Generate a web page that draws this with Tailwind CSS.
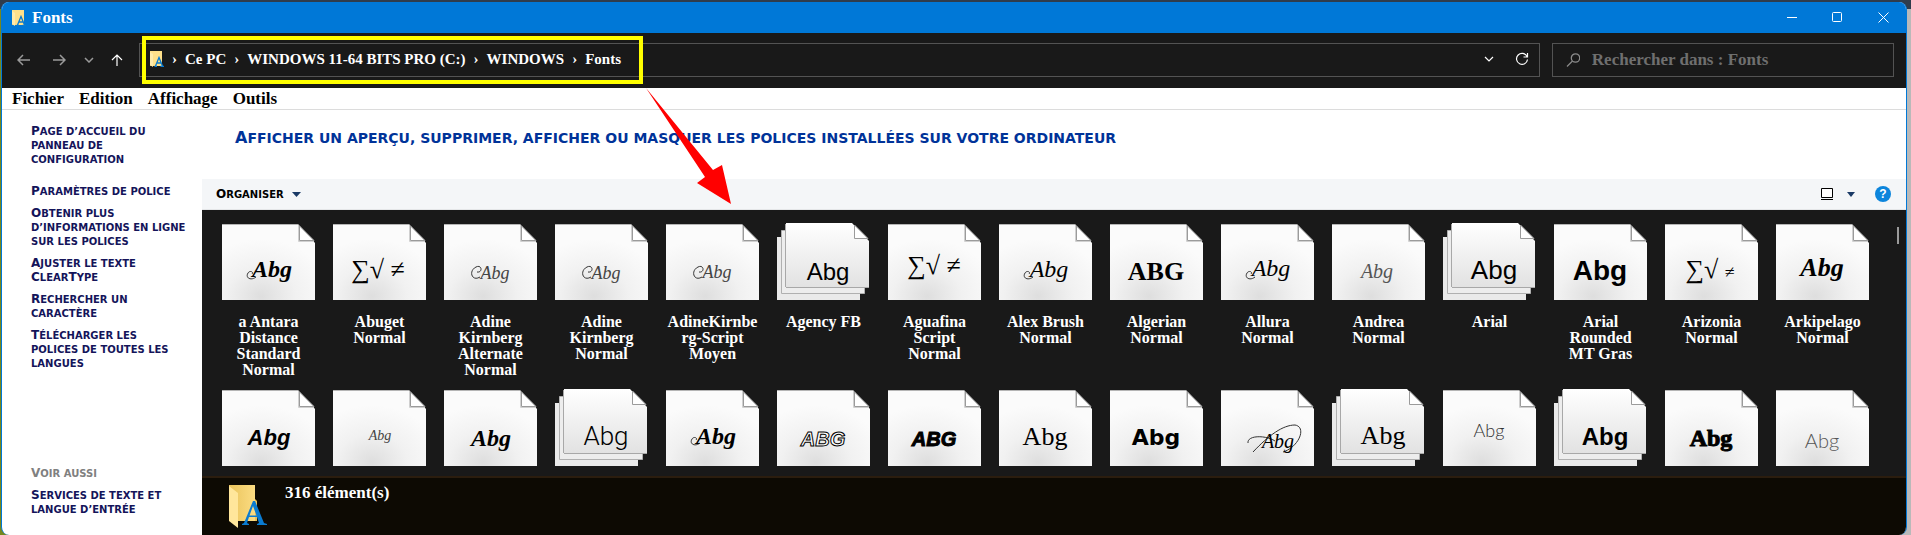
<!DOCTYPE html>
<html lang="fr">
<head>
  <meta charset="UTF-8">
  <title>Fonts</title>
  <meta name="viewport" content="width=device-width, initial-scale=1.0">
  <script src="https://cdn.jsdelivr.net/npm/@tailwindcss/browser@4"></script>
</head>
<body class="h-screen overflow-hidden bg-[linear-gradient(to_bottom,#2f3c4c_9px,transparent_9px),linear-gradient(to_right,#76871c_50%,#b9b9b9_50%)] pt-[2px] pl-px pr-1 font-['Liberation_Serif',serif]">

  <!-- Shared drawings -->
  <svg class="absolute h-0 w-0">
    <defs>
      <radialGradient id="paper" cx="0.42" cy="0.95" r="0.75">
        <stop offset="0" stop-color="#dedede"/>
        <stop offset="0.5" stop-color="#f1f1f1"/>
        <stop offset="1" stop-color="#fbfbfb"/>
      </radialGradient>
      <linearGradient id="sheet" x1="0" y1="0" x2="0" y2="1">
        <stop offset="0" stop-color="#ffffff"/>
        <stop offset="1" stop-color="#e2e2e2"/>
      </linearGradient>
      <linearGradient id="folderBack" x1="0" y1="0" x2="1" y2="0">
        <stop offset="0" stop-color="#eac45c"/>
        <stop offset="1" stop-color="#fbdc82"/>
      </linearGradient>
      <symbol id="page" viewBox="0 0 93 77">
        <path d="M0 1H76L93 20V77H0Z" fill="url(#paper)"/>
        <path d="M0 1.5H76" stroke="#b5b5b5"/>
        <path d="M77.500 3V17.500H92Z" fill="#fff" stroke="#9b9b9b"/>
        <path d="M76.500 2V18.500H92" fill="none" stroke="#d0d0d0"/>
      </symbol>
      <symbol id="pages" viewBox="0 0 93 77">
        <path d="M0 14H70L83 28V77H0Z" fill="#eaeaea"/>
        <path d="M4.500 7.500H72L87.500 24V70.500H4.500Z" fill="#ededed" stroke="#b0b0b0"/>
        <path d="M9 0H75L92 18V64H9Z" fill="url(#sheet)"/>
        <path d="M9 64.5H92M8.5 1V64" stroke="#a8a8a8"/>
        <path d="M77.500 2V15.500H91Z" fill="#fff" stroke="#9b9b9b"/>
      </symbol>
      <symbol id="folder" viewBox="0 0 38 43">
        <path d="M0 0H26V36H0Z" fill="url(#folderBack)"/>
        <path d="M26 14L28 16V36H26Z" fill="#e9c25a"/>
        <path d="M0 1L9 8V43L0 36Z" fill="#ffe69b"/>
        <path fill-rule="evenodd" d="M13 39L15 38L24 16H26L35 38L38 39V40H28V39L30 38L28 32H20L18 38L20 39V40H13ZM20.500 30.500H27.500L24 21Z" fill="#0a7bd0"/>
      </symbol>
      <symbol id="smallFolder" viewBox="0 0 14 16">
        <path d="M0 0H12V15H0Z" fill="url(#folderBack)"/>
        <path d="M0 0H12V15H4L0 13Z" fill="#ffe08a"/>
        <path d="M0 1L3 3V16L0 14Z" fill="#ffebac"/>
        <path d="M4.500 15.300H7M10.500 15.300H14M5.500 15L9 6.500L12.500 15M7 12H11.500" fill="none" stroke="#0a7bd0" stroke-width="1.300"/>
      </symbol>
    </defs>
  </svg>

  <div class="relative flex h-full flex-col overflow-hidden rounded-lg border-x border-[#0078d7] bg-white">

    <!-- Title bar -->
    <header class="flex h-[31px] shrink-0 items-center bg-[#0078d7] pl-[10px] text-white">
      <svg class="mr-[6px] h-4 w-[14px]"><use href="#smallFolder"/></svg>
      <h1 class="flex-1 text-[17px] leading-5 font-bold">Fonts</h1>
      <button aria-label="Réduire" class="flex h-full w-[46px] items-center justify-center">
        <svg class="h-[11px] w-[11px]" fill="none" stroke="currentColor"><path d="M0 5.500H10"/></svg>
      </button>
      <button aria-label="Agrandir" class="flex h-full w-[45px] items-center justify-center">
        <svg class="h-[11px] w-[11px]" fill="none" stroke="currentColor"><rect x="0.500" y="0.500" width="9" height="9" rx="1"/></svg>
      </button>
      <button aria-label="Fermer" class="flex h-full w-[46px] items-center justify-center">
        <svg class="h-[11px] w-[11px]" fill="none" stroke="currentColor"><path d="M0.500 0.500L10.500 10.500M10.500 0.500L0.500 10.500"/></svg>
      </button>
    </header>

    <!-- Navigation -->
    <div class="flex h-[55px] shrink-0 items-center bg-[#191919] pr-3 pb-px pl-1 text-white">
      <button aria-label="Précédent" class="flex w-[35px] justify-center text-[#9a9a9a]">
        <svg class="h-3 w-[14px]" fill="none" stroke="currentColor" stroke-width="1.500"><path d="M13 6H1M6 1L1 6L6 11"/></svg>
      </button>
      <button aria-label="Suivant" class="flex w-[35px] justify-center text-[#9a9a9a]">
        <svg class="h-3 w-[14px]" fill="none" stroke="currentColor" stroke-width="1.500"><path d="M1 6H13M8 1L13 6L8 11"/></svg>
      </button>
      <button aria-label="Emplacements récents" class="flex w-[25px] justify-center text-[#9a9a9a]">
        <svg class="h-[6px] w-[10px]" fill="none" stroke="currentColor" stroke-width="1.500"><path d="M1 1L5 5L9 1"/></svg>
      </button>
      <button aria-label="Dossier parent" class="mr-[6px] flex w-8 justify-center">
        <svg class="h-3 w-3" fill="none" stroke="currentColor" stroke-width="1.200"><path d="M6 12V1M1 6L6 1L11 6"/></svg>
      </button>
      <nav aria-label="Adresse" class="mr-3 flex h-[34px] flex-1 items-center border border-[#535353] pb-[2px] pl-[10px] text-[15px] leading-5 font-bold">
        <svg class="h-4 w-[14px]"><use href="#smallFolder"/></svg>
        <span class="w-[21px] text-center">›</span>
        <a href="#">Ce PC</a>
        <span class="w-[21px] text-center">›</span>
        <a href="#">WINDOWS 11-64 BITS PRO (C:)</a>
        <span class="w-[21px] text-center">›</span>
        <a href="#">WINDOWS</a>
        <span class="w-[21px] text-center">›</span>
        <a href="#" class="flex-1">Fonts</a>
        <button aria-label="Historique" class="flex w-8 justify-center">
          <svg class="h-[6px] w-[10px]" fill="none" stroke="currentColor" stroke-width="1.200"><path d="M1 1L5 5L9 1"/></svg>
        </button>
        <button aria-label="Actualiser" class="flex w-[34px] justify-center">
          <svg class="h-[14px] w-[14px]" fill="none" stroke="currentColor" stroke-width="1.200"><path d="M12 4.500A5.500 5.500 0 1 0 12.500 7.500M12.500 1V5H8.500"/></svg>
        </button>
      </nav>
      <label class="flex h-[34px] w-[342px] items-center border border-[#535353] pb-px pl-[13px]">
        <svg class="mr-3 h-[14px] w-[15px]" fill="none" stroke="#8a8a8a" stroke-width="1.300"><circle cx="9.500" cy="5" r="4.200"/><path d="M6.500 8L1 13.500"/></svg>
        <input type="search" aria-label="Rechercher" placeholder="Rechercher dans : Fonts" class="w-full text-[17px] leading-5 font-bold outline-none placeholder:text-[#6f6f6f]">
      </label>
    </div>

    <!-- Menu -->
    <div class="flex h-[22px] shrink-0 items-center gap-[15px] border-b border-[#dcdcdc] pl-[10px] text-[17px] leading-5 font-bold text-black">
      <button>Fichier</button>
      <button>Edition</button>
      <button>Affichage</button>
      <button>Outils</button>
    </div>

    <div class="flex min-h-0 flex-1">
      <!-- Sidebar -->
      <aside class="flex w-[200px] shrink-0 flex-col gap-2 pt-[15px] pb-[18px] pl-[29px] font-['DejaVu_Sans',sans-serif] text-[10px] leading-[14px] font-bold whitespace-nowrap text-[#14145a] uppercase">
        <a href="#" class="mb-[10px] block first-letter:text-xs first-letter:leading-none">Page d’accueil du<br>panneau de<br>configuration</a>
        <a href="#" class="block first-letter:text-xs first-letter:leading-none">Paramètres de police</a>
        <a href="#" class="block first-letter:text-xs first-letter:leading-none">Obtenir plus<br>d’informations en ligne<br>sur les polices</a>
        <a href="#" class="block first-letter:text-xs first-letter:leading-none">Ajuster le texte<br><span class="text-xs leading-none">C</span>lear<span class="text-xs leading-none">T</span>ype</a>
        <a href="#" class="block first-letter:text-xs first-letter:leading-none">Rechercher un<br>caractère</a>
        <a href="#" class="block first-letter:text-xs first-letter:leading-none">Télécharger les<br>polices de toutes les<br>langues</a>
        <h2 class="mt-auto text-[#808080] first-letter:text-xs first-letter:leading-none">Voir aussi</h2>
        <a href="#" class="block first-letter:text-xs first-letter:leading-none">Services de texte et<br>langue d’entrée</a>
      </aside>

      <main class="flex min-w-0 flex-1 flex-col">
        <h2 class="h-[69px] shrink-0 pt-[18px] pl-[33px] font-['DejaVu_Sans',sans-serif] text-sm leading-5 font-bold text-[#003399] uppercase first-letter:text-base first-letter:leading-none">Afficher un aperçu, supprimer, afficher ou masquer les polices installées sur votre ordinateur</h2>

        <!-- Toolbar -->
        <div class="flex h-[31px] shrink-0 items-center border-b border-[#e4e6e8] bg-[#f4f6f8] pr-[15px] pl-[14px]">
          <button class="mr-auto flex items-center gap-2 font-['DejaVu_Sans',sans-serif] text-[10px] font-bold text-black uppercase">
            <span class="block first-letter:text-xs">Organiser</span>
            <svg class="h-[5px] w-[9px]" fill="#1a3a66"><path d="M0 0H9L4.500 5Z"/></svg>
          </button>
          <button aria-label="Affichage" class="mr-[14px]">
            <svg class="block h-[13px] w-[12px]" fill="#fff" stroke="#000"><path d="M0.500 0.500H11.500V9.500H0.500ZM0 11.500H12"/></svg>
          </button>
          <button aria-label="Plus d’options" class="mr-5">
            <svg class="block h-[5px] w-2" fill="#1a3a66"><path d="M0 0H8L4 5Z"/></svg>
          </button>
          <button aria-label="Aide" class="h-4 w-4 rounded-full bg-[#0c85dc] text-center font-['Liberation_Sans',sans-serif] text-xs leading-4 font-bold text-white">?</button>
        </div>

        <!-- Fonts -->
        <div class="flex min-h-0 flex-1 justify-between overflow-hidden bg-[#191919] pt-[13px] pr-[7px] pl-[11px]">
          <ul id="fonts" class="grid flex-1 auto-rows-[166px] grid-cols-[repeat(auto-fill,111px)]"></ul>
          <div class="mt-1 h-[17px] w-[2px] bg-[#9a9a9a]"></div>
        </div>

        <!-- Details -->
        <footer class="flex h-[59px] shrink-0 items-start border-t-2 border-[#2b1d0e] bg-[#0d0a03] pt-[7px] pl-[27px] text-white">
          <svg class="h-[43px] w-[38px]"><use href="#folder"/></svg>
          <p class="pl-[18px] text-[17px] leading-4 font-bold">316 élément(s)</p>
        </footer>
      </main>
    </div>
  </div>

  <!-- Annotations -->
  <div class="absolute top-9 left-[142px] h-12 w-[501px] border-4 border-[#ffff00]"></div>
  <svg class="absolute top-[88px] left-[646px] h-[116px] w-[86px]" fill="#ff0000"><path d="M0 0L67 82L76 77L85 116L51 95L59 89Z"/></svg>

  <script>
    // swashes drawn beside the script faces
    const curl = 'M36 54C28 59 24 48 32 44C38 41 39 50 33 49';
    const tail = 'M34 54C29 58 23 55 26 50C28 47 32 49 30 51';
    const loops = 'M27 54C26 46 45 46 54 52M32 63C48 46 62 36 74 36C86 38 78 58 62 63';

    // name, preview text, classes, center x, baseline y, several styles, swash
    const fonts = [
      ['a Antara Distance Standard Normal', 'Abg', 'text-2xl italic font-bold', 50, 54, false, tail],
      ['Abuget Normal', '∑√ ≠', 'text-[26px]', 45, 55],
      ['Adine Kirnberg Alternate Normal', 'Abg', 'text-lg italic fill-[#444444]', 51, 56, false, curl],
      ['Adine Kirnberg Normal', 'Abg', 'text-lg italic fill-[#444444]', 51, 56, false, curl],
      ['AdineKirnberg-Script Moyen', 'Abg', 'text-lg italic fill-[#444444]', 51, 55, false, curl],
      ['Agency FB', 'Abg', "text-2xl font-['Liberation_Sans_Narrow','Liberation_Sans',sans-serif]", 51, 57, true],
      ['Aguafina Script Normal', '∑√ ≠', 'text-[26px]', 46, 51],
      ['Alex Brush Normal', 'Abg', 'text-2xl italic', 50, 54, false, tail],
      ['Algerian Normal', 'ABG', 'text-[26px] font-bold', 46, 57],
      ['Allura Normal', 'Abg', 'text-2xl italic', 50, 53, false, tail],
      ['Andrea Normal', 'Abg', 'text-xl italic fill-[#555555]', 45, 55],
      ['Arial', 'Abg', "text-[26px] font-['Liberation_Sans',sans-serif]", 51, 56, true],
      ['Arial<br>Rounded<br>MT Gras', 'Abg', "text-[28px] font-bold font-['Liberation_Sans',sans-serif]", 46, 57],
      ['Arizonia Normal', '∑√ <tspan class="text-lg">≠</tspan>', 'text-[26px]', 45, 55],
      ['Arkipelago Normal', 'Abg', 'text-[26px] italic font-bold', 46, 53],
      ['', 'Abg', "text-[22px] italic font-bold font-['Liberation_Sans',sans-serif]", 47, 56],
      ['', 'Abg', 'text-sm italic fill-[#444444]', 47, 51],
      ['', 'Abg', 'text-2xl italic font-bold', 47, 57],
      ['', 'Abg', "text-[26px] font-light font-['Roboto',sans-serif]", 51, 56, true],
      ['', 'Abg', 'text-2xl italic font-bold', 50, 55, false, tail],
      ['', 'ABG', "text-xl italic font-bold fill-white stroke-black font-['Liberation_Sans',sans-serif]", 46, 57],
      ['', 'ABG', "text-xl italic font-bold stroke-black font-['Liberation_Sans',sans-serif]", 46, 57],
      ['', 'Abg', 'text-[26px]', 46, 56],
      ['', 'Abg', "text-[22px] font-bold font-['DejaVu_Sans',sans-serif]", 46, 56],
      ['', 'Abg', 'text-xl italic', 57, 59, false, loops],
      ['', 'Abg', 'text-[26px]', 51, 55, true],
      ['', 'Abg', "text-lg font-light fill-[#333333] font-['Lato',sans-serif]", 46, 48],
      ['', 'Abg', "text-2xl font-bold font-['Liberation_Sans',sans-serif]", 51, 56, true],
      ['', 'Abg', 'text-2xl font-bold stroke-black', 46, 57],
      ['', 'Abg', "text-xl font-light fill-[#555555] font-['Lato',sans-serif]", 46, 59]
    ];

    document.getElementById('fonts').innerHTML = fonts.map(([name, preview, classes, x, y, stacked, swash]) => `
      <li class="flex flex-col items-center">
        <svg class="h-[77px] w-[93px] shrink-0">
          <use href="${stacked ? '#pages' : '#page'}"/>
          ${swash ? `<path d="${swash}" fill="none" stroke="#333"/>` : ''}
          <text x="${x}" y="${y}" text-anchor="middle" class="${classes}">${preview}</text>
        </svg>
        <p class="mt-[14px] w-[95px] text-center text-base leading-4 font-bold wrap-break-word text-white">${name}</p>
      </li>`).join('');
  </script>
</body>
</html>
